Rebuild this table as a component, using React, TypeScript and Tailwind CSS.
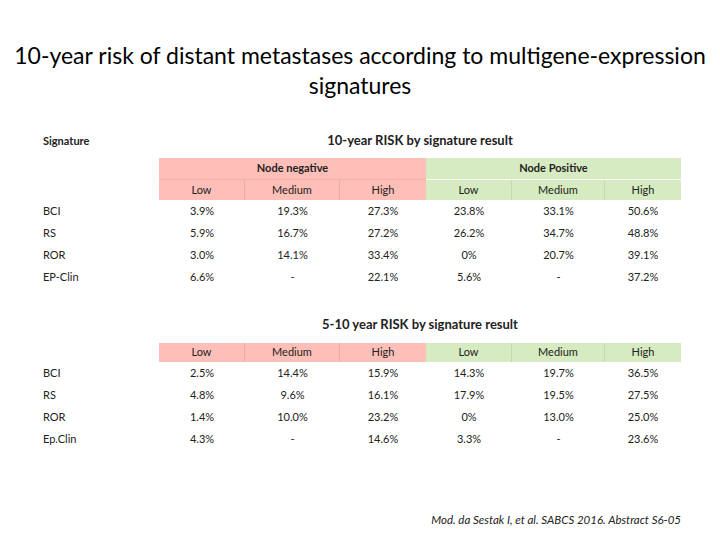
const cols = "grid grid-cols-[159px_86px_95px_86px_86px_93px_76px]";

const levels = ["Low", "Medium", "High"];

const tenYear = [
  ["BCI", "3.9%", "19.3%", "27.3%", "23.8%", "33.1%", "50.6%"],
  ["RS", "5.9%", "16.7%", "27.2%", "26.2%", "34.7%", "48.8%"],
  ["ROR", "3.0%", "14.1%", "33.4%", "0%", "20.7%", "39.1%"],
  ["EP-Clin", "6.6%", "-", "22.1%", "5.6%", "-", "37.2%"],
];

const fiveTen = [
  ["BCI", "2.5%", "14.4%", "15.9%", "14.3%", "19.7%", "36.5%"],
  ["RS", "4.8%", "9.6%", "16.1%", "17.9%", "19.5%", "27.5%"],
  ["ROR", "1.4%", "10.0%", "23.2%", "0%", "13.0%", "25.0%"],
  ["Ep.Clin", "4.3%", "-", "14.6%", "3.3%", "-", "23.6%"],
];

const LevelRow = ({ height }: { height: string }) => (
  <div className={`${cols} ${height}`}>
    <div />
    {levels.map((l, i) => (
      <div
        key={"n" + l}
        className={`bg-[#fdbfb7] flex items-center justify-center ${i < 2 ? "border-r border-[#eeaaa2]" : ""}`}
      >
        {l}
      </div>
    ))}
    {levels.map((l, i) => (
      <div
        key={"p" + l}
        className={`bg-[#d6ebc1] flex items-center justify-center ${i < 2 ? "border-r border-[#c2dea8]" : ""}`}
      >
        {l}
      </div>
    ))}
  </div>
);

const DataRows = ({ rows }: { rows: string[][] }) => (
  <div>
    {rows.map((r) => (
      <div key={r[0]} className={`${cols} h-[22px] items-center`}>
        <div className="pl-[43px]">{r[0]}</div>
        {r.slice(1).map((v, i) => (
          <div key={i} className="text-center">
            {v}
          </div>
        ))}
      </div>
    ))}
  </div>
);

export default function App() {
  return (
    <div className="w-[720px] h-[540px] bg-white text-[#222] font-['Lato','Liberation_Sans',sans-serif] text-[11px]">
      <h1 className="pt-[40px] text-center text-[23px] leading-[30px] text-black whitespace-nowrap">
        10-year risk of distant metastases according to multigene-expression
        <br />
        signatures
      </h1>

      <div className="mt-[31px] flex h-[20px] items-center">
        <div className="w-[159px] pl-[43px] font-bold">Signature</div>
        <div className="w-[522px] text-center text-[13px] font-bold">10-year RISK by signature result</div>
      </div>

      <div className="mt-[7px] grid grid-cols-[159px_267px_255px] h-[21px] font-bold">
        <div />
        <div className="bg-[#fdbfb7] flex items-center justify-center">Node negative</div>
        <div className="bg-[#d6ebc1] flex items-center justify-center">Node Positive</div>
      </div>
      <div className="border-t border-[#f2b0a8] w-[267px] ml-[159px]" />
      <LevelRow height="h-[20px]" />
      <DataRows rows={tenYear} />

      <div className="mt-[27px] flex h-[20px] items-center">
        <div className="w-[159px]" />
        <div className="w-[522px] text-center text-[13px] font-bold">5-10 year RISK by signature result</div>
      </div>

      <div className="mt-[8px]">
        <LevelRow height="h-[19px]" />
      </div>
      <DataRows rows={fiveTen} />

      <div className="mt-[61px] w-[681px] text-right italic text-[11.5px]">
        Mod. da Sestak I, et al. SABCS 2016. Abstract S6-05
      </div>
    </div>
  );
}
